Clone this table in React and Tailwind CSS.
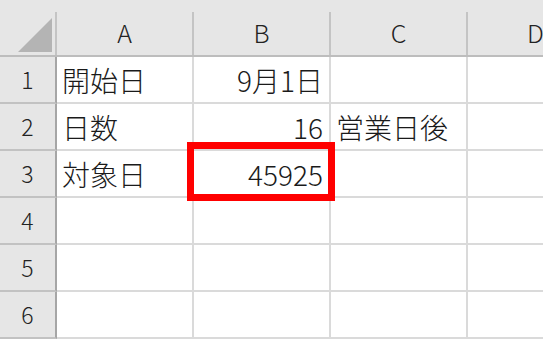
import React from "react";

const font = { fontFamily: '"Noto Sans CJK JP", "Noto Sans", sans-serif' };

const columns = ["A", "B", "C", "D"];

const rows = [
  { n: 1, cells: [{ t: "開始日" }, { t: "9月1日", right: true }, { t: "" }, { t: "" }] },
  { n: 2, cells: [{ t: "日数" }, { t: "16", right: true }, { t: "営業日後" }, { t: "" }] },
  { n: 3, cells: [{ t: "対象日" }, { t: "45925", right: true }, { t: "" }, { t: "" }] },
  { n: 4, cells: [{ t: "" }, { t: "" }, { t: "" }, { t: "" }] },
  { n: 5, cells: [{ t: "" }, { t: "" }, { t: "" }, { t: "" }] },
  { n: 6, cells: [{ t: "" }, { t: "" }, { t: "" }, { t: "" }] },
];

function HeaderRow() {
  return (
    <div className="flex h-[57px] shrink-0 bg-[#e6e6e6] border-b-2 border-[#bdbdbd]">
      <div className="relative w-[57px] shrink-0 flex flex-col">
        <div className="h-[12px]" />
        <div className="flex-1 border-r-2 border-[#c4c4c4] relative">
          <svg className="absolute left-[18px] top-[6px]" width="34" height="34" viewBox="0 0 34 34">
            <polygon points="34,0 34,34 0,34" fill="#b4b4b4" />
          </svg>
        </div>
      </div>
      {columns.map((c) => (
        <div key={c} className="w-[137px] shrink-0 flex flex-col">
          <div className="h-[12px]" />
          <div className="flex-1 border-r-2 border-[#c4c4c4] flex items-center justify-center text-[25px] font-light text-[#222] leading-none pb-[2px]">
            {c}
          </div>
        </div>
      ))}
    </div>
  );
}

function Row({ n, cells }) {
  return (
    <div className="flex h-[47px] shrink-0">
      <div className="w-[57px] shrink-0 bg-[#e6e6e6] border-r-2 border-b-2 border-r-[#a6a6a6] border-b-[#c2c2c2] flex items-center justify-center text-[23px] font-light text-[#222] leading-none">
        {n}
      </div>
      {cells.map((cell, i) => (
        <div
          key={i}
          className={
            "w-[137px] shrink-0 border-r-2 border-b-2 border-[#dadada] flex items-center text-[28px] font-light text-[#1a1a1a] leading-none whitespace-nowrap overflow-visible " +
            (cell.right ? "justify-end pr-[6px]" : "justify-start pl-[5px]")
          }
        >
          {cell.t}
        </div>
      ))}
    </div>
  );
}

export default function App() {
  return (
    <div className="relative w-[543px] h-[343px] overflow-hidden bg-white" style={font}>
      <div className="flex flex-col w-[700px]">
        <HeaderRow />
        {rows.map((r) => (
          <Row key={r.n} n={r.n} cells={r.cells} />
        ))}
      </div>
      {/* highlight around the result cell */}
      <div className="absolute left-[187px] top-[142px] w-[148px] h-[59px] border-[7px] border-[#ff0000]" />
    </div>
  );
}
